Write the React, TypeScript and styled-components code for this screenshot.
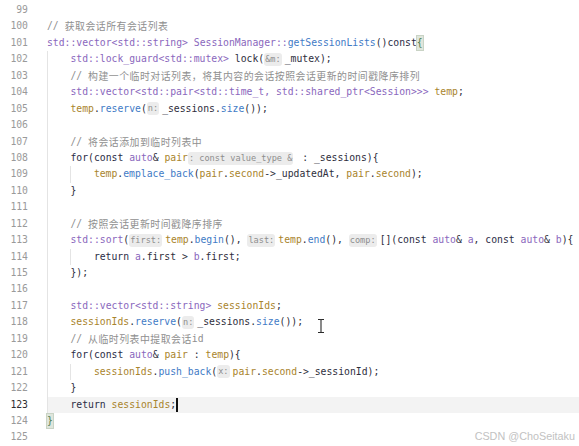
import React from "react";
import styled, { createGlobalStyle, css } from "styled-components";

const Global = createGlobalStyle`
  html, body { margin: 0; padding: 0; background: #ffffff; overflow: hidden; }
  #root { width: 579px; height: 446px; }
`;

const Editor = styled.div`
  position: relative;
  width: 579px;
  height: 446px;
  box-sizing: border-box;
  padding-top: 2px;
  background: #ffffff;
  overflow: hidden;
  font-family: "DejaVu Sans Mono", "Liberation Mono", monospace;
  font-size: 9.75px;
`;

const Row = styled.div`
  display: flex;
  height: 16.45px;
  line-height: 16.45px;
  white-space: nowrap;
`;

const LineNo = styled.span<{ $current?: boolean }>`
  width: 28px;
  flex: none;
  text-align: right;
  color: ${(p) => (p.$current ? "#2f2f2f" : "#9a9a9a")};
  margin-right: 19px;
`;

const Code = styled.span<{ $current?: boolean }>`
  flex: 1;
  display: flex;
  align-items: center;
  color: #2e2e3c;
  background: ${(p) => (p.$current ? "#f3f3f3" : "transparent")};
`;

const Guide = styled.span`
  display: inline-block;
  flex: none;
  width: 23.45px;
  height: 16.45px;
  box-sizing: border-box;
  border-left: 1px solid #e4e4e4;
`;

type Kind = "p" | "t" | "f" | "v" | "k" | "c" | "j" | "h" | "b";

const kindStyle: Record<Kind, ReturnType<typeof css>> = {
  p: css`color: #2e2e3c;`,
  t: css`color: #8a67bd;`,
  f: css`color: #3f7bc6;`,
  v: css`color: #a9842c;`,
  k: css`color: #2b2d45;`,
  c: css`color: #8f8f8f;`,
  j: css`
    color: #8f8f8f;
    font-family: "Noto Sans CJK SC", "DejaVu Sans", sans-serif;
    font-size: 9.9px;
    letter-spacing: 0.5px;
  `,
  h: css`
    color: #8e8e8e;
    background: #ececec;
    border-radius: 3px;
    font-size: 8.6px;
    line-height: 13px;
    padding: 0 1px;
    margin-right: 3px;
  `,
  b: css`
    color: #4f7d4f;
    background: #dfe6dc;
    outline: 1px solid #c9d3c5;
    line-height: 14px;
  `,
};

const Tok = styled.span<{ $kind: Kind }>`
  white-space: pre;
  ${(p) => kindStyle[p.$kind]}
`;

const Caret = styled.span`
  display: inline-block;
  width: 1.5px;
  height: 14px;
  background: #111111;
`;

const Watermark = styled.div`
  position: absolute;
  right: 4px;
  bottom: 4px;
  font-family: "Liberation Sans", Arial, sans-serif;
  font-size: 10.8px;
  color: #c2c2c2;
`;

const MouseCursor = styled.svg`
  position: absolute;
  left: 317px;
  top: 318px;
`;

type Tk = [Kind, string];
type Line = { n: number; indent: number; toks: Tk[]; current?: boolean; caret?: boolean };

const STD_VEC: Tk = ["t", "std::vector<std::string>"];

const lines: Line[] = [
  { n: 99, indent: 0, toks: [] },
  { n: 100, indent: 0, toks: [["c", "// "], ["j", "获取会话所有会话列表"]] },
  {
    n: 101,
    indent: 0,
    toks: [STD_VEC, ["p", " "], ["t", "SessionManager::"], ["f", "getSessionLists"], ["p", "()"], ["k", "const"], ["b", "{"]],
  },
  { n: 102, indent: 1, toks: [["t", "std::lock_guard<std::mutex>"], ["p", " lock("], ["h", "&m:"], ["p", "_mutex);"]] },
  { n: 103, indent: 1, toks: [["c", "// "], ["j", "构建一个临时对话列表，将其内容的会话按照会话更新的时间戳降序排列"]] },
  {
    n: 104,
    indent: 1,
    toks: [["t", "std::vector<std::pair<std::time_t, std::shared_ptr<Session>>>"], ["p", " "], ["v", "temp"], ["p", ";"]],
  },
  {
    n: 105,
    indent: 1,
    toks: [["v", "temp"], ["p", "."], ["f", "reserve"], ["p", "("], ["h", "n:"], ["p", "_sessions."], ["f", "size"], ["p", "());"]],
  },
  { n: 106, indent: 1, toks: [] },
  { n: 107, indent: 1, toks: [["c", "// "], ["j", "将会话添加到临时列表中"]] },
  {
    n: 108,
    indent: 1,
    toks: [["k", "for"], ["p", "("], ["k", "const"], ["p", " "], ["t", "auto"], ["p", "& "], ["v", "pair"], ["h", ": const value_type &"], ["p", " : _sessions){"]],
  },
  {
    n: 109,
    indent: 2,
    toks: [["v", "temp"], ["p", "."], ["f", "emplace_back"], ["p", "("], ["v", "pair"], ["p", "."], ["v", "second"], ["p", "->_updatedAt, "], ["v", "pair"], ["p", "."], ["v", "second"], ["p", ");"]],
  },
  { n: 110, indent: 1, toks: [["p", "}"]] },
  { n: 111, indent: 1, toks: [] },
  { n: 112, indent: 1, toks: [["c", "// "], ["j", "按照会话更新时间戳降序排序"]] },
  {
    n: 113,
    indent: 1,
    toks: [
      ["t", "std::sort"], ["p", "("], ["h", "first:"], ["v", "temp"], ["p", "."], ["f", "begin"], ["p", "(), "],
      ["h", "last:"], ["v", "temp"], ["p", "."], ["f", "end"], ["p", "(), "], ["h", "comp:"], ["p", "[]("],
      ["k", "const"], ["p", " "], ["t", "auto"], ["p", "& "], ["t", "a"], ["p", ", "], ["k", "const"], ["p", " "], ["t", "auto"], ["p", "& "], ["t", "b"], ["p", "){"],
    ],
  },
  { n: 114, indent: 2, toks: [["k", "return"], ["p", " "], ["t", "a"], ["p", ".first > "], ["t", "b"], ["p", ".first;"]] },
  { n: 115, indent: 1, toks: [["p", "});"]] },
  { n: 116, indent: 1, toks: [] },
  { n: 117, indent: 1, toks: [STD_VEC, ["p", " "], ["v", "sessionIds"], ["p", ";"]] },
  {
    n: 118,
    indent: 1,
    toks: [["v", "sessionIds"], ["p", "."], ["f", "reserve"], ["p", "("], ["h", "n:"], ["p", "_sessions."], ["f", "size"], ["p", "());"]],
  },
  { n: 119, indent: 1, toks: [["c", "// "], ["j", "从临时列表中提取会话"], ["c", "id"]] },
  {
    n: 120,
    indent: 1,
    toks: [["k", "for"], ["p", "("], ["k", "const"], ["p", " "], ["t", "auto"], ["p", "& "], ["v", "pair"], ["p", " : "], ["v", "temp"], ["p", "){"]],
  },
  {
    n: 121,
    indent: 2,
    toks: [["v", "sessionIds"], ["p", "."], ["f", "push_back"], ["p", "("], ["h", "x:"], ["v", "pair"], ["p", "."], ["v", "second"], ["p", "->_sessionId);"]],
  },
  { n: 122, indent: 1, toks: [["p", "}"]] },
  { n: 123, indent: 1, toks: [["k", "return"], ["p", " "], ["v", "sessionIds"], ["p", ";"]], current: true, caret: true },
  { n: 124, indent: 0, toks: [["b", "}"]] },
  { n: 125, indent: 0, toks: [] },
];

export default function App() {
  return (
    <>
      <Global />
      <Editor>
        {lines.map((l) => (
          <Row key={l.n}>
            <LineNo $current={l.current}>{l.n}</LineNo>
            <Code $current={l.current}>
              {Array.from({ length: l.indent }).map((_, i) => (
                <Guide key={i} />
              ))}
              {l.toks.map(([k, s], i) => (
                <Tok key={i} $kind={k}>
                  {s}
                </Tok>
              ))}
              {l.caret && <Caret />}
            </Code>
          </Row>
        ))}
        <MouseCursor width="8" height="16" viewBox="0 0 8 16">
          <path d="M1 1.5h2.2c0.5 0 0.8 0.4 0.8 0.8v11.4c0 0.4 -0.3 0.8 -0.8 0.8H1 M7 1.5H4.8c-0.5 0 -0.8 0.4 -0.8 0.8v11.4c0 0.4 0.3 0.8 0.8 0.8H7" fill="none" stroke="#2a2a2a" strokeWidth="1.1" />
        </MouseCursor>
        <Watermark>CSDN @ChoSeitaku</Watermark>
      </Editor>
    </>
  );
}
